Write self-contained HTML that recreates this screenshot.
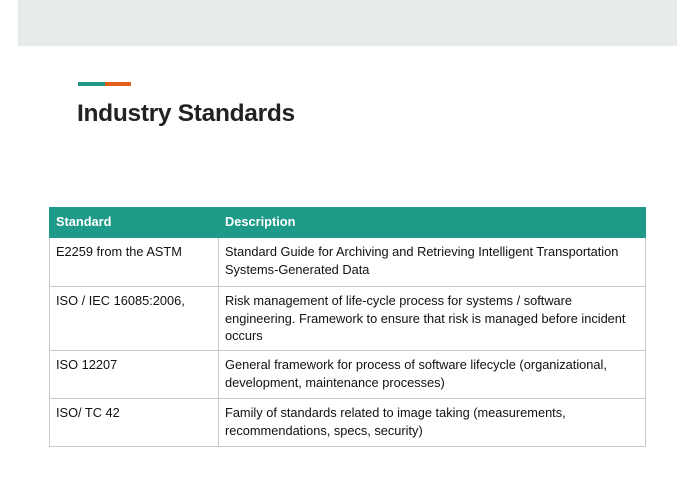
<!DOCTYPE html>
<html><head><meta charset="utf-8"><style>
html,body{margin:0;padding:0;background:#fff;width:695px;height:494px;overflow:hidden;font-family:"Liberation Sans",Arial,sans-serif;}
.band{position:absolute;left:18px;top:0;width:659px;height:46px;background:#e8ebec;}
.bar1{position:absolute;left:78px;top:82px;width:27px;height:4px;background:#1f9886;}
.bar2{position:absolute;left:105px;top:82px;width:26px;height:4px;background:#e0601c;}
h1{position:absolute;left:77px;top:100px;margin:0;font-size:24.5px;font-weight:bold;color:#222;letter-spacing:-0.3px;}
table{position:absolute;left:49px;top:207px;width:597px;border-collapse:collapse;font-size:12.8px;color:#111;}
td,th{border:1px solid #c8c8c8;text-align:left;vertical-align:top;padding:5px 6px 0 6px;line-height:17.5px;}
th{background:#1e9a89;color:#fff;font-weight:bold;height:24px;border-color:#1e9a89;padding-top:5px;}
td:first-child,th:first-child{width:156px;}
tr.r1 td{height:43px}
tr.r2 td{height:58px}
tr.r3 td{height:42px}
tr.r4 td{height:42px}
</style></head><body>
<div class="band"></div>
<div class="bar1"></div><div class="bar2"></div>
<h1>Industry Standards</h1>
<table>
<tr><th>Standard</th><th>Description</th></tr>
<tr class="r1"><td>E2259 from the ASTM</td><td>Standard Guide for Archiving and Retrieving Intelligent Transportation Systems-Generated Data</td></tr>
<tr class="r2"><td>ISO / IEC 16085:2006,</td><td>Risk management of life-cycle process for systems / software engineering. Framework to ensure that risk is managed before incident occurs</td></tr>
<tr class="r3"><td>ISO 12207</td><td>General framework for process of software lifecycle (organizational, development, maintenance processes)</td></tr>
<tr class="r4"><td>ISO/ TC 42</td><td>Family of standards related to image taking (measurements, recommendations, specs, security)</td></tr>
</table>
</body></html>
